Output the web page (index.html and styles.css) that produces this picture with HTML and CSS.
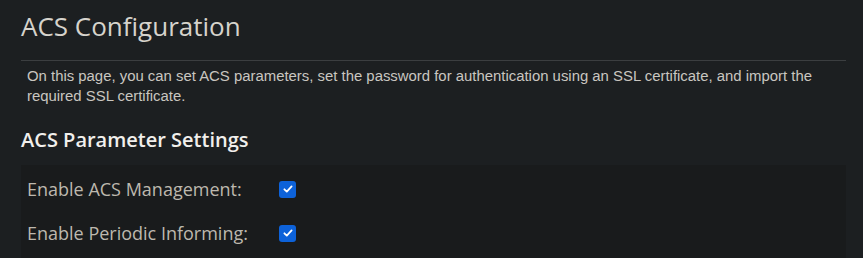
FILE: index.html
```html
<!DOCTYPE html>
<html lang="en">
<head>
<meta charset="utf-8">
<title>ACS Configuration</title>
<link rel="stylesheet" href="styles.css">
</head>
<body>
<div class="page">
  <h1 class="title">ACS Configuration</h1>
  <p class="desc">On this page, you can set ACS parameters, set the password for authentication using an SSL certificate, and import the required SSL certificate.</p>
  <h2 class="section">ACS Parameter Settings</h2>
  <div class="panel">
    <div class="row">
      <span class="label">Enable ACS Management:</span>
      <span class="check"><svg viewBox="0 0 16 16" width="12" height="12"><path d="M3.2 8.4 L6.4 11.4 L12.8 4.6" fill="none" stroke="#fff" stroke-width="2.4" stroke-linecap="round" stroke-linejoin="round"/></svg></span>
    </div>
    <div class="row">
      <span class="label">Enable Periodic Informing:</span>
      <span class="check"><svg viewBox="0 0 16 16" width="12" height="12"><path d="M3.2 8.4 L6.4 11.4 L12.8 4.6" fill="none" stroke="#fff" stroke-width="2.4" stroke-linecap="round" stroke-linejoin="round"/></svg></span>
    </div>
  </div>
</div>
</body>
</html>
```
FILE: styles.css
```css
html, body {
  margin: 0;
  padding: 0;
  background: #1c1f21;
  height: 100%;
}
body {
  font-family: "Open Sans", "Noto Sans", sans-serif;
}
.page {
  width: 825px;
  padding-left: 21px;
  padding-top: 8px;
}
.title {
  margin: 0;
  font-size: 26px;
  font-weight: 400;
  color: #d6d3cc;
  line-height: 36px;
  padding-bottom: 16px;
  border-bottom: 1px solid #3b3e40;
}
.desc {
  margin: 0;
  padding: 5px 6px 0 6px;
  font-family: "Liberation Sans", Arial, sans-serif;
  font-size: 14.9px;
  line-height: 20px;
  color: #c9c6c0;
}
.section {
  margin: 0;
  padding-top: 20px;
  font-size: 20px;
  font-weight: 600;
  color: #f1efec;
  line-height: 28px;
}
.panel {
  margin-top: 11px;
  background: #191b1c;
  padding: 2px 6px 10px 6px;
}
.row {
  display: flex;
  align-items: center;
  height: 44px;
}
.label {
  width: 252px;
  font-size: 18px;
  color: #bdb8ae;
}
.check {
  width: 17px;
  height: 17px;
  border-radius: 3px;
  background: #0d62d9;
  display: flex;
  align-items: center;
  justify-content: center;
}
```
